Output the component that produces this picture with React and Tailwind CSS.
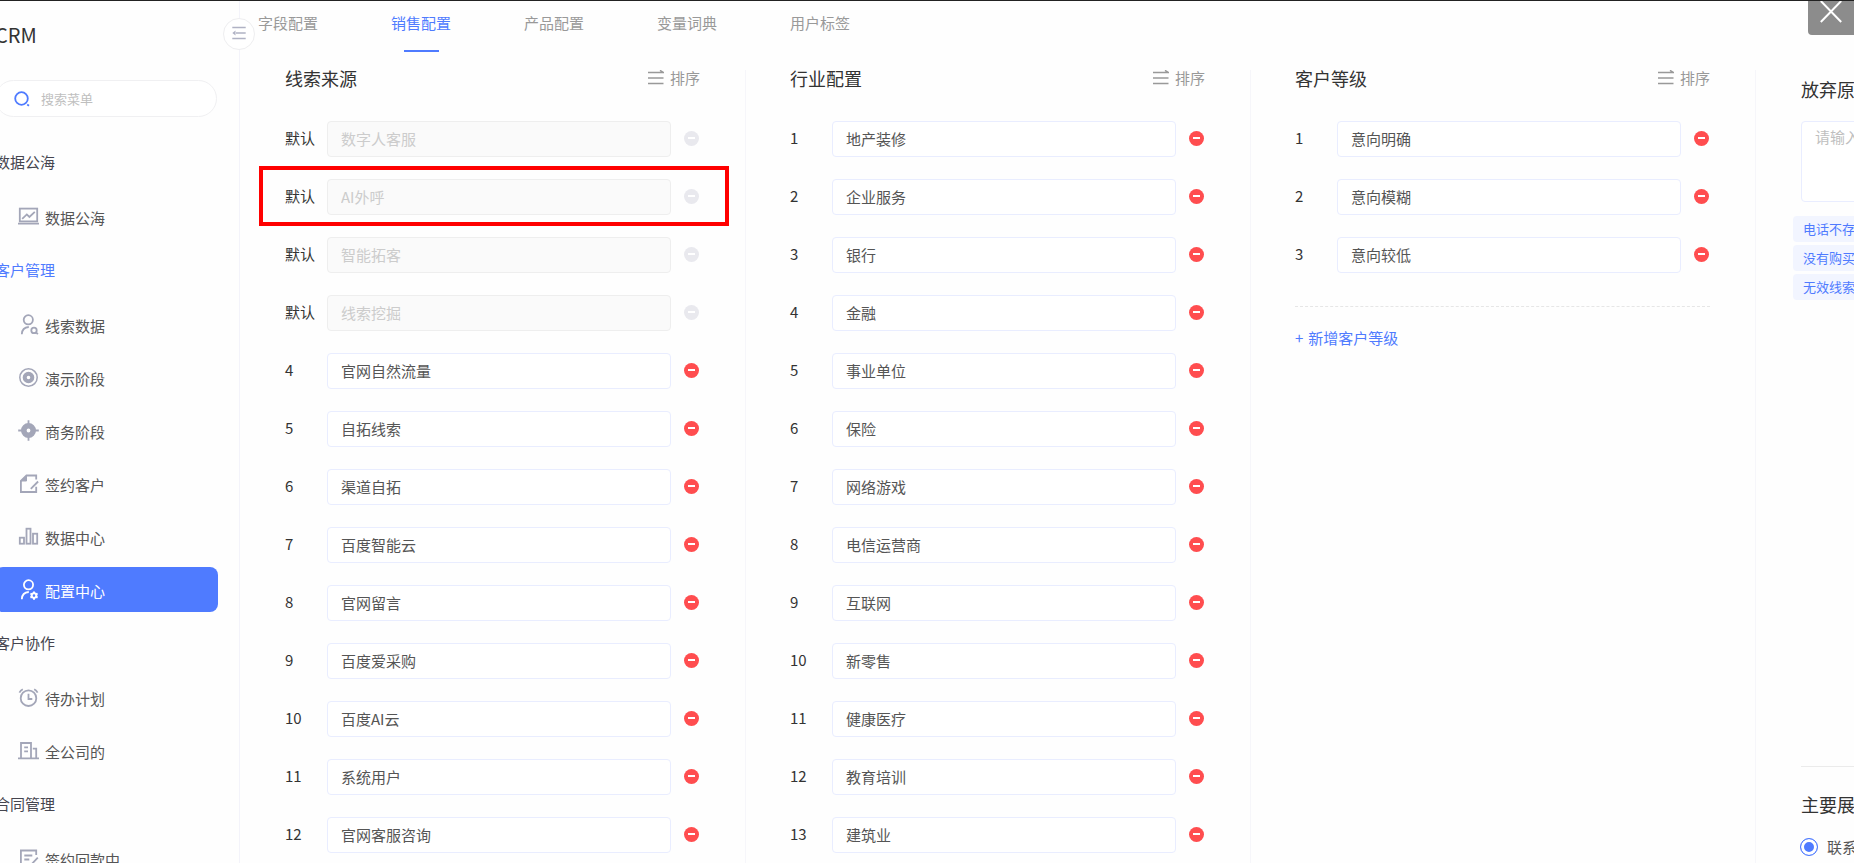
// App.jsx
import { useState } from "react";

const ICONS = {
    monitor: (
        <>
            <rect x="1.8" y="2.6" width="17.4" height="12.8" />
            <path d="M0 17.6h21M4.2 12.8l4.6-4.4 2.6 2.6 5.4-5.2" />
        </>
    ),
    userSearch: (
        <>
            <circle cx="10.3" cy="5.8" r="4.6" />
            <path d="M3.8 20.2c.2-4.4 2.8-7 7-7.2" />
            <circle cx="16" cy="16.4" r="2.7" />
            <path d="M18 18.4l1.9 1.8" />
        </>
    ),
    target: (
        <>
            <circle cx="10.5" cy="10.5" r="8.7" strokeWidth="1.5" />
            <circle cx="10.5" cy="10.5" r="3.8" strokeWidth="4" />
        </>
    ),
    crosshair: (
        <>
            <circle cx="10.5" cy="10.5" r="4.7" strokeWidth="5.6" />
            <path d="M10.5.3v4M10.5 16.7v4M.2 10.5h4M16.8 10.5h4" />
        </>
    ),
    contract: (
        <>
            <path d="M18.2 6.5V2.5H8.5L2.9 8v11h15.3v-5.2" />
            <path d="M8.5 2.5V8H2.9z" fill="currentColor" strokeWidth="1" />
            <path d="M12.8 15.8l7.3-7.3" />
        </>
    ),
    bars: (
        <>
            <rect x="1.8" y="11.7" width="4.2" height="6" />
            <rect x="8.5" y="2.7" width="4" height="15" />
            <rect x="15" y="7.7" width="4.2" height="10" />
        </>
    ),
    userCog: (
        <>
            <circle cx="10.5" cy="5.8" r="4.6" />
            <path d="M3.8 20.2c.2-4.4 2.8-7 7-7.2" />
            <circle cx="16" cy="16.6" r="2.3" strokeWidth="2" />
            <path d="M16 12.4v2M16 18.8v2M12.4 14.5l1.7 1M17.9 17.7l1.7 1M12.4 18.7l1.7-1M17.9 15.5l1.7-1" strokeWidth="2" />
        </>
    ),
    alarm: (
        <>
            <circle cx="10.5" cy="11.2" r="7.8" />
            <path d="M10.5 6.8v5.2h3.8" />
            <path d="M1.4 5.6C2.2 4.2 3.3 3.1 4.8 2.3M19.6 5.6c-.8-1.4-1.900-2.500-3.400-3.300" />
        </>
    ),
    building: (
        <path d="M3 18.4V3h10v15.400M14.800 8.600h3.400v9.800M0 18.400h21M6.200 7.400h3.800M6.200 11.400h3.800" />
    ),
    receipt: (
        <>
            <path d="M18.200 7V2.500H2.900v16.700h8M6.300 7.500h8M6.300 11.500h5" />
            <path d="M12.300 17.600l7.500-8M15.500 19.200h3" />
        </>
    ),
};

const MENU = [
    { title: "数据公海", items: [{ label: "数据公海", icon: "monitor" }] },
    {
        title: "客户管理",
        current: true,
        items: [
            { label: "线索数据", icon: "userSearch" },
            { label: "演示阶段", icon: "target" },
            { label: "商务阶段", icon: "crosshair" },
            { label: "签约客户", icon: "contract" },
            { label: "数据中心", icon: "bars" },
            { label: "配置中心", icon: "userCog", active: true },
        ],
    },
    {
        title: "客户协作",
        items: [
            { label: "待办计划", icon: "alarm" },
            { label: "全公司的", icon: "building" },
        ],
    },
    { title: "合同管理", items: [{ label: "签约回款中", icon: "receipt" }] },
];

const TABS = ["字段配置", "销售配置", "产品配置", "变量词典", "用户标签"];

const SOURCES = [
    { no: "默认", name: "数字人客服", locked: true },
    { no: "默认", name: "AI外呼", locked: true, marked: true },
    { no: "默认", name: "智能拓客", locked: true },
    { no: "默认", name: "线索挖掘", locked: true },
    { no: "4", name: "官网自然流量" },
    { no: "5", name: "自拓线索" },
    { no: "6", name: "渠道自拓" },
    { no: "7", name: "百度智能云" },
    { no: "8", name: "官网留言" },
    { no: "9", name: "百度爱采购" },
    { no: "10", name: "百度AI云" },
    { no: "11", name: "系统用户" },
    { no: "12", name: "官网客服咨询" },
];

const INDUSTRIES = [
    "地产装修", "企业服务", "银行", "金融", "事业单位", "保险", "网络游戏",
    "电信运营商", "互联网", "新零售", "健康医疗", "教育培训", "建筑业",
].map((name, i) => ({ no: String(i + 1), name }));

const LEVELS = ["意向明确", "意向模糊", "意向较低"].map((name, i) => ({ no: String(i + 1), name }));

const REASONS = ["电话不存在", "没有购买意向", "无效线索"];

const MenuIcon = ({ name }) => (
    <svg className="w-[21px] h-[21px] shrink-0" viewBox="0 0 21 21" fill="none" stroke="currentColor" strokeWidth="1.8">
        {ICONS[name]}
    </svg>
);

const Sidebar = () => (
    <aside className="relative z-10 -ml-[5px] w-[245px] shrink-0 border-r border-[#f3f3fa] pt-[19px]">
        <div className="text-xl leading-[30px] text-[#333]">CRM</div>

        <button
            aria-label="收起菜单"
            className="absolute top-[17px] -right-4 w-8 h-8 rounded-full border border-[#eeeef0] bg-white flex items-center justify-center text-[#b0b2c4]"
        >
            <svg className="w-4 h-4" viewBox="0 0 16 16" fill="none" stroke="currentColor" strokeWidth="1.6">
                <path d="M1.3 1.5h13.400M5 7h9.700M1.300 12.500h13.400" />
                <path d="M4.5 4.500v5L1.300 7z" fill="currentColor" stroke="none" />
            </svg>
        </button>

        <label className="mt-[30px] mr-[22px] h-[37px] flex items-center gap-[11px] rounded-full border border-[#f0f0f2] bg-white pl-[18px]">
            <svg className="w-4 h-4 shrink-0" viewBox="0 0 16 16" fill="none" stroke="#4f7bff" strokeWidth="1.8">
                <circle cx="7.5" cy="7.500" r="6.300" />
                <path d="M13.200 13.600l1.800 1.200" />
            </svg>
            <input
                type="text"
                placeholder="搜索菜单"
                aria-label="搜索菜单"
                className="w-full min-w-0 bg-transparent text-[13px] placeholder:text-[#bfbfbf] outline-none"
            />
        </label>

        <nav className="mt-[18px]">
            {MENU.map((group) => (
                <section key={group.title}>
                    <h3 className={`h-[55px] flex items-center text-[15px] ${group.current ? "text-[#4f7bff]" : "text-[#45454f]"}`}>
                        {group.title}
                    </h3>
                    {group.items.map((item) => (
                        <div key={item.label} className="h-[53px] flex items-center pr-[21px]">
                            <a
                                href="#"
                                className={`flex-1 h-[45px] rounded-lg flex items-center gap-[6px] pl-[23px] ${
                                    item.active ? "bg-[#4f7bff] text-white" : "text-[#a3a6b8]"
                                }`}
                            >
                                <MenuIcon name={item.icon} />
                                <span className={`pt-1 text-[15px] ${item.active ? "text-white" : "text-[#555]"}`}>{item.label}</span>
                            </a>
                        </div>
                    ))}
                </section>
            ))}
        </nav>
    </aside>
);

const ConfigRow = ({ id, row }) => (
    <div className="relative h-9 flex items-center">
        <label htmlFor={id} className="w-[42px] shrink-0 pb-0.5 text-[15px] text-[#333]">{row.no}</label>
        <input
            id={id}
            type="text"
            defaultValue={row.name}
            disabled={row.locked}
            className="flex-1 min-w-0 h-9 px-[13px] pb-0.5 rounded border border-[#e9edff] bg-white text-[15px] text-[#555] outline-none disabled:bg-[#fafafa] disabled:border-[#eeeeee] disabled:text-[#cccccc]"
        />
        <button
            aria-label={`删除${row.name}`}
            disabled={row.locked}
            className="ml-[13px] mr-px mb-0.5 w-[15px] h-[15px] shrink-0 rounded-full bg-[#ff4d4f] disabled:bg-[#e9e9ee] flex items-center justify-center"
        >
            <span className="w-[7px] h-[2px] bg-white" />
        </button>
        {row.marked && (
            <div className="absolute -left-[26px] -right-[29px] -top-[13px] -bottom-[11px] border-4 border-[#ff0000] pointer-events-none" />
        )}
    </div>
);

const ConfigColumn = ({ id, title, rows, first, children }) => (
    <section className={`w-[505px] shrink-0 border-l pl-11 pr-[45px] ${first ? "border-transparent" : "border-[#f6f6fa]"}`}>
        <div className="h-4 flex items-center justify-between">
            <h2 className="text-lg text-[#333]">{title}</h2>
            <button className="flex items-center gap-[6px] text-[15px] text-[#999]">
                <svg className="w-4 h-4" viewBox="0 0 16 16" fill="none" stroke="currentColor" strokeWidth="1.4">
                    <path d="M0 2.500h15.500L12 .3M0 8h15.500M0 13.500h15.500" />
                </svg>
                排序
            </button>
        </div>
        <div className="mt-[35px] flex flex-col gap-[22px]">
            {rows.map((row, i) => (
                <ConfigRow key={row.name} id={`${id}-${i}`} row={row} />
            ))}
        </div>
        {children}
    </section>
);

const AbandonColumn = () => (
    <section className="w-[505px] shrink-0 border-l border-[#f6f6fa] pl-[45px] pr-11 flex flex-col">
        <div className="flex-1">
            <label htmlFor="reason" className="block pt-[5px] text-lg text-[#333]">放弃原因</label>
            <textarea
                id="reason"
                placeholder="请输入放弃原因"
                className="mt-[18px] block w-full h-[81px] resize-none rounded border border-[#e9edff] bg-white px-[13px] py-[3px] text-[15px] leading-6 placeholder:text-[#bfbfbf] outline-none"
            />
            <div className="mt-[14px] -ml-2 flex flex-col items-start gap-[3px]">
                {REASONS.map((reason) => (
                    <button key={reason} className="h-[26px] px-2.5 rounded-sm bg-[#f2f5ff] text-[13px] text-[#4f7bff]">
                        {reason}
                    </button>
                ))}
            </div>
        </div>
        <div className="h-[97px] border-t border-[#ebebeb] pt-[23px]">
            <h2 className="text-lg text-[#333]">主要展示</h2>
            <label className="mt-[18px] -ml-px flex items-center gap-[9px] text-[15px] text-[#555]">
                <input
                    type="radio"
                    name="display"
                    defaultChecked
                    className="appearance-none w-[18px] h-[18px] rounded-full border border-[#4f7bff] bg-white checked:bg-[#4f7bff] shadow-[inset_0_0_0_3px_white]"
                />
                联系人
            </label>
        </div>
    </section>
);

const App = () => {
    const [tab, setTab] = useState("销售配置");

    return (
        <div className="relative h-screen overflow-hidden flex bg-[#fefefe] border-t border-[#222] font-['Noto_Sans_CJK_SC',sans-serif]">
            <Sidebar />

            <main className="flex-1 min-w-0 flex flex-col">
                <nav className="h-[69px] shrink-0 flex items-start gap-[73px] pl-[18px]">
                    {TABS.map((name) => (
                        <button
                            key={name}
                            onClick={() => setTab(name)}
                            className={`h-[51px] pt-[10px] flex flex-col items-center justify-between text-[15px] leading-6 ${
                                tab === name ? "text-[#4f7bff]" : "text-[#999]"
                            }`}
                        >
                            {name}
                            {tab === name && <span className="w-[35px] h-[2px] bg-[#4f7bff]" />}
                        </button>
                    ))}
                </nav>

                <div className="flex-1 min-h-0 flex overflow-hidden">
                    <ConfigColumn id="source" title="线索来源" rows={SOURCES} first />
                    <ConfigColumn id="industry" title="行业配置" rows={INDUSTRIES} />
                    <ConfigColumn id="level" title="客户等级" rows={LEVELS}>
                        <div className="mt-[33px] border-t border-dashed border-[#e6e6e6] pt-5">
                            <button className="flex gap-[5px] text-[15px] text-[#4f7bff]">
                                <span>+</span>
                                <span>新增客户等级</span>
                            </button>
                        </div>
                    </ConfigColumn>
                    <AbandonColumn />
                </div>
            </main>

            {/* Preview close button, sits over the page corner */}
            <button
                aria-label="关闭"
                className="absolute right-0 top-0 w-[46px] h-[34px] rounded-bl bg-[#8c8c8c] flex justify-center text-white"
            >
                <svg className="w-[22px] h-[22px]" viewBox="0 0 22 22" fill="none" stroke="currentColor" strokeWidth="2">
                    <path d="M.8 0l20.400 21M21.200 0L.8 21" />
                </svg>
            </button>
        </div>
    );
};

export default App;
